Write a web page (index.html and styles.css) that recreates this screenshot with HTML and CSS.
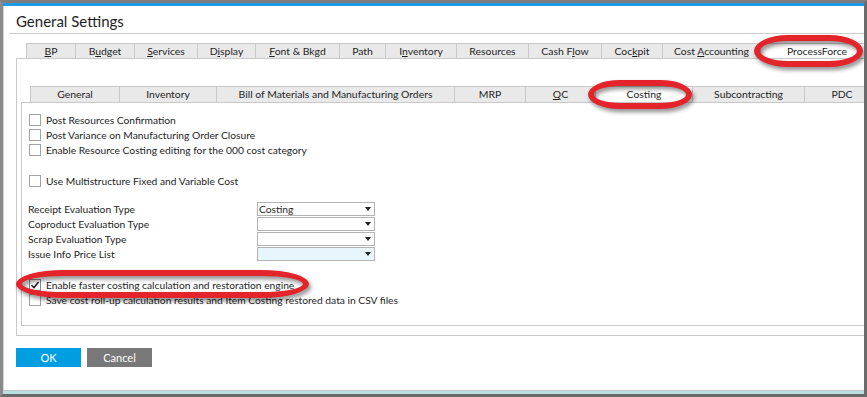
FILE: index.html
```html
<!DOCTYPE html>
<html>
<head>
<meta charset="utf-8">
<link rel="stylesheet" href="styles.css">
</head>
<body>
<div class="window">
  <div class="topbar"></div>
  <div class="title">General Settings</div>
  <div class="sep"></div>

  <div class="tabset outer">
    <div class="tabrow">
      <div class="tab w49"><u>B</u>P</div>
      <div class="tab w59">B<u>u</u>dget</div>
      <div class="tab w63"><u>S</u>ervices</div>
      <div class="tab w58">D<u>i</u>splay</div>
      <div class="tab w84"><u>F</u>ont &amp; Bkgd</div>
      <div class="tab w46">Path</div>
      <div class="tab w71">I<u>n</u>ventory</div>
      <div class="tab w72">Resources</div>
      <div class="tab w73">Cash F<u>l</u>ow</div>
      <div class="tab w61">Coc<u>k</u>pit</div>
      <div class="tab w98">Cost <u>A</u>ccounting</div>
      <div class="tab w114 active">ProcessForce</div>
    </div>
    <div class="panel outer-panel">
      <div class="tabset inner">
        <div class="tabrow inner-row">
          <div class="tab w89">General</div>
          <div class="tab w97">Inventory</div>
          <div class="tab w238">Bill of Materials and Manufacturing Orders</div>
          <div class="tab w71">MRP</div>
          <div class="tab w70"><u>Q</u>C</div>
          <div class="tab w97 active">Costing</div>
          <div class="tab w112">Subcontracting</div>
          <div class="tab w76">PDC</div>
        </div>
        <div class="panel inner-panel">
          <div class="check"><span class="box"></span><span>Post Resources Confirmation</span></div>
          <div class="check"><span class="box"></span><span>Post Variance on Manufacturing Order Closure</span></div>
          <div class="check"><span class="box"></span><span>Enable Resource Costing editing for the 000 cost category</span></div>
          <div class="check gap-top"><span class="box"></span><span>Use Multistructure Fixed and Variable Cost</span></div>

          <div class="fields">
            <div class="label">Receipt Evaluation Type</div>
            <div class="select"><span>Costing</span><span class="arrow"></span></div>
            <div class="label">Coproduct Evaluation Type</div>
            <div class="select"><span></span><span class="arrow"></span></div>
            <div class="label">Scrap Evaluation Type</div>
            <div class="select"><span></span><span class="arrow"></span></div>
            <div class="label">Issue Info Price List</div>
            <div class="select blue"><span></span><span class="arrow"></span></div>
          </div>

          <div class="check gap-top2"><span class="box checked"><svg width="10" height="10" viewBox="0 0 10 10"><path d="M1.5 5.2 L4 7.6 L8.6 2" fill="none" stroke="#1a1a1a" stroke-width="1.5"/></svg></span><span>Enable faster costing calculation and restoration engine</span></div>
          <div class="check"><span class="box"></span><span>Save cost roll-up calculation results and Item Costing restored data in CSV files</span></div>
        </div>
      </div>
    </div>
  </div>

  <div class="buttons">
    <div class="btn ok">OK</div>
    <div class="btn cancel">Cancel</div>
  </div>

  <div class="spacer"></div>
  <div class="footer"></div>

  <div class="ring ring-pf"></div>
  <div class="ring ring-costing"></div>
  <div class="ring ring-engine"></div>
</div>
</body>
</html>
```

FILE: styles.css
```css
* { box-sizing: border-box; }
html, body { margin: 0; padding: 0; background: #ffffff; }
body { width: 867px; height: 397px; overflow: hidden; font-family: Lato, "Noto Sans", sans-serif; color: #1e1e1e; }

.window {
  position: relative;
  width: 867px;
  height: 397px;
  border-style: solid;
  border-width: 3px;
  border-color: #7e7e7e #6b6b6b #6b6b6b #8a8a8a;
  background: #ffffff;
  overflow: hidden;
  display: flex;
  flex-direction: column;
  box-shadow: inset 1px 0 0 #d4d4d4;
}

.topbar { height: 3px; background: #1d9be6; flex: none; }

.title {
  padding: 5px 0 0 13px;
  font-size: 15px;
  line-height: 20px;
  height: 25px;
  color: #1e1e1e;
  flex: none;
}

.sep {
  margin: 2px 0 0 6px;
  height: 1px;
  background: #cdcdcd;
  flex: none;
}

.tabset.outer {
  margin: 9px 0 0 13px;
  width: 900px;
  flex: none;
}

.tabrow {
  display: flex;
  padding-left: 10px;
  height: 15px;
}

.tab {
  flex: none;
  height: 100%;
  background: #e9e9e9;
  border: 1px solid #c9c9c9;
  border-bottom: none;
  border-right: none;
  font-size: 10.4px;
  line-height: 14px;
  text-align: center;
  color: #1e1e1e;
  white-space: nowrap;
}
.tab:last-child { border-right: 1px solid #c9c9c9; }
.tab.active { background: #ffffff; }
.tab u { text-decoration: underline; text-underline-offset: 1px; }

.w46 { width: 46px; } .w49 { width: 49px; } .w58 { width: 58px; } .w59 { width: 59px; }
.w61 { width: 61px; } .w63 { width: 63px; } .w70 { width: 70px; } .w71 { width: 71px; }
.w72 { width: 72px; } .w73 { width: 73px; } .w76 { width: 76px; } .w84 { width: 84px; }
.w89 { width: 89px; } .w97 { width: 97px; } .w98 { width: 98px; } .w112 { width: 112px; }
.w114 { width: 114px; } .w238 { width: 238px; }

.panel { border: 1px solid #c9c9c9; }

.outer-panel {
  padding: 27px 0 9px 4px;
}

.inner-row { padding-left: 9px; height: 16px; }
.inner-row .tab { line-height: 15px; }

.inner-panel {
  padding: 9px 0 18px 6px;
}

.check {
  display: flex;
  align-items: center;
  height: 15px;
  padding-left: 1px;
  font-size: 10.25px;
  white-space: nowrap;
}
.check .box {
  width: 12px;
  height: 12px;
  border: 1px solid #a3a3a3;
  background: #fff;
  margin-right: 5px;
  flex: none;
  display: flex;
  align-items: center;
  justify-content: center;
}
.check .box.checked { border-color: #8c8c8c; }
.gap-top { margin-top: 16px; }
.gap-top2 { margin-top: 16px; }

.fields {
  margin-top: 14px;
  display: grid;
  grid-template-columns: 229px 118px;
  grid-auto-rows: 14px;
  row-gap: 1px;
  font-size: 10.25px;
}
.label { line-height: 14px; white-space: nowrap; }
.select {
  border: 1px solid #b4b4b4;
  background: #fff;
  display: flex;
  align-items: center;
  justify-content: space-between;
  padding: 0 3px 0 1px;
  line-height: 12px;
}
.select.blue { background: #e9f5fd; }
.arrow {
  width: 0; height: 0;
  border-left: 3.5px solid transparent;
  border-right: 3.5px solid transparent;
  border-top: 4px solid #222;
}

.buttons {
  display: flex;
  gap: 6px;
  margin: 12px 0 0 13px;
  flex: none;
}
.btn {
  width: 65px;
  height: 19px;
  color: #ffffff;
  font-size: 11px;
  line-height: 19px;
  text-align: center;
}
.btn.ok { background: #009de0; }
.btn.cancel { background: #787878; }

.spacer { flex: 1; }
.footer {
  height: 4px;
  border-top: 1px solid #c6c6c6;
  background: #b9dfe0;
  flex: none;
}

.ring {
  position: absolute;
  border: 6px solid #e3242b;
  filter: drop-shadow(2px 3px 2px rgba(0,0,0,0.45));
}
.ring-pf { left: 751px; top: 32px; width: 109px; height: 32px; border-radius: 34px / 16px; }
.ring-costing { left: 585px; top: 77px; width: 104px; height: 29px; border-radius: 32px / 14.5px; }
.ring-engine { left: 13px; top: 267px; width: 293px; height: 28px; border-radius: 48px / 14px; }
```
